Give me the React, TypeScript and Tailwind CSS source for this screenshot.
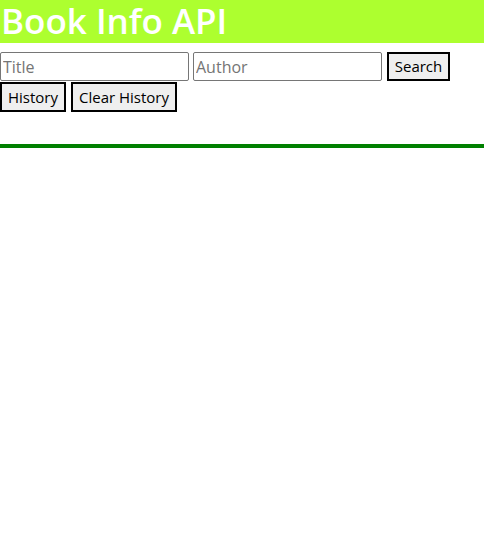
export default function App() {
  return (
    <div className="min-h-[543px] bg-white font-['Open_Sans',sans-serif] text-black">
      <header className="h-[43px] bg-[#adff2f]">
        <h1 className="pl-[1px] text-[35px] font-semibold leading-[42px] text-white">Book Info API</h1>
      </header>
      <div className="mt-[9px] flex items-center gap-[4px]">
        <input
          placeholder="Title"
          className="h-[29px] w-[189px] rounded-[2px] border border-[#767676] px-[2px] text-[16px] placeholder:text-[#757575]"
        />
        <input
          placeholder="Author"
          className="h-[29px] w-[189px] rounded-[2px] border border-[#767676] px-[2px] text-[16px] placeholder:text-[#757575]"
        />
        <button className="ml-[1px] h-[29px] w-[63px] border-2 border-black bg-[#efefef] text-[15px]">
          Search
        </button>
      </div>
      <div className="mt-[1px] flex items-center gap-[5px]">
        <button className="h-[30px] w-[66px] border-2 border-black bg-[#efefef] text-[15px]">History</button>
        <button className="h-[30px] w-[106px] border-2 border-black bg-[#efefef] text-[15px]">Clear History</button>
      </div>
      <div className="mt-[32px] h-[4px] bg-[#008000]" />
    </div>
  )
}
